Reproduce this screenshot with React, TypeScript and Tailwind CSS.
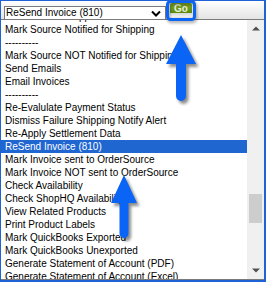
import React from "react";

const items: { t: string; sel?: boolean }[] = [
  { t: "Mark Source Notified for Shipping" },
  { t: "----------" },
  { t: "Mark Source NOT Notified for Shipping" },
  { t: "Send Emails" },
  { t: "Email Invoices" },
  { t: "----------" },
  { t: "Re-Evalulate Payment Status" },
  { t: "Dismiss Failure Shipping Notify Alert" },
  { t: "Re-Apply Settlement Data" },
  { t: "ReSend Invoice (810)", sel: true },
  { t: "Mark Invoice sent to OrderSource" },
  { t: "Mark Invoice NOT sent to OrderSource" },
  { t: "Check Availability" },
  { t: "Check ShopHQ Availability" },
  { t: "View Related Products" },
  { t: "Print Product Labels" },
  { t: "Mark QuickBooks Exported" },
  { t: "Mark QuickBooks Unexported" },
  { t: "Generate Statement of Account (PDF)" },
  { t: "Generate Statement of Account (Excel)" },
];

function Arrow({ tipX, tipY, headW, baseY, shaftW, bottomY }: { tipX: number; tipY: number; headW: number; baseY: number; shaftW: number; bottomY: number }) {
  const hw = headW / 2;
  const sw = shaftW / 2;
  const d = `M ${tipX} ${tipY} L ${tipX + hw} ${baseY} L ${tipX + sw} ${baseY} L ${tipX + sw} ${bottomY - sw} A ${sw} ${sw} 0 0 1 ${tipX - sw} ${bottomY - sw} L ${tipX - sw} ${baseY} L ${tipX - hw} ${baseY} Z`;
  return (
    <g>
      <path d={d} fill="#000" opacity="0.45" transform="translate(2.5,3)" filter="url(#blur)" />
      <path d={d} fill="#0a64f5" />
    </g>
  );
}

export default function App() {
  return (
    <div
      className="relative w-[266px] h-[282px] border-t border-l border-r-2 border-b-2 border-[#1f62d6] flex flex-col overflow-hidden bg-white"
      style={{ fontFamily: '"Liberation Sans", Arial, sans-serif' }}
    >
      {/* header */}
      <div className="h-[18px] shrink-0 flex items-start bg-gradient-to-b from-white to-[#e4e4e4]">
        <div className="ml-[3px] mt-[5px] w-[162px] h-[13px] border-t border-l border-r border-[#7a7a7a] bg-white flex items-center justify-between pl-[1px] pr-[4px]">
          <span className="text-[10px] leading-[12px] text-black">ReSend Invoice (810)</span>
          <svg width="10" height="7" viewBox="0 0 10 7" className="mt-[1px]">
            <path d="M1 1.5 L5 5.5 L9 1.5" stroke="#000" strokeWidth="2" fill="none" />
          </svg>
        </div>
        <div className="ml-[4px] mt-[2px] w-[22px] h-[14px] rounded-[2px] flex flex-col overflow-hidden">
          <div className="h-[10px] bg-gradient-to-b from-[#7fa82a] to-[#5a8a08] flex items-center justify-center">
            <span className="text-[10px] font-bold leading-[10px] text-[#e9eedd] mt-[1px]">Go</span>
          </div>
          <div className="flex-1 bg-gradient-to-b from-[#d8d8d8] to-[#f0f0f0]" />
        </div>
      </div>

      {/* list */}
      <div className="flex-1 border-t border-b border-[#7a7a7a] flex min-h-0">
        <div className="flex-1 overflow-hidden flex flex-col">
          <div className="h-[13px] shrink-0 -mt-[10px] pl-[4px] text-[10px] leading-[13px] text-black whitespace-nowrap">
            Mark Source Shipped
          </div>
          {items.map((it, i) => (
            <div
              key={i}
              className={
                "h-[13px] shrink-0 pl-[4px] text-[10px] leading-[13px] whitespace-nowrap " +
                (it.sel ? "bg-[#1f66d1] text-white" : "text-black")
              }
            >
              {it.t}
            </div>
          ))}
        </div>
        {/* scrollbar */}
        <div className="w-[17px] shrink-0 bg-[#f0f0f0] flex flex-col items-center">
          <div className="h-[17px] w-full flex items-center justify-center">
            <svg width="8" height="5" viewBox="0 0 8 5"><path d="M0 4.5 L4 0.5 L8 4.5 Z" fill="#505050" /></svg>
          </div>
          <div className="h-[157px]" />
          <div className="w-[13px] h-[29px] bg-[#cdcdcd]" />
          <div className="flex-1" />
          <div className="h-[17px] w-full flex items-center justify-center">
            <svg width="8" height="5" viewBox="0 0 8 5"><path d="M0 0.5 L8 0.5 L4 4.5 Z" fill="#505050" /></svg>
          </div>
        </div>
      </div>

      {/* annotations */}
      <svg className="absolute left-[-1px] top-[-1px] pointer-events-none" width="266" height="282" viewBox="0 0 266 282">
        <defs>
          <filter id="blur" x="-50%" y="-50%" width="200%" height="200%">
            <feGaussianBlur stdDeviation="1.5" />
          </filter>
        </defs>
        <rect x="167.5" y="2" width="27" height="18" rx="3" fill="none" stroke="#000" strokeOpacity="0.35" strokeWidth="3" filter="url(#blur)" transform="translate(1,1.5)" />
        <rect x="167.5" y="1.5" width="27" height="18" rx="3" fill="none" stroke="#0a64f5" strokeWidth="3" />
        <Arrow tipX={181} tipY={35} headW={30} baseY={64} shaftW={10} bottomY={101} />
        <Arrow tipX={124} tipY={175} headW={26} baseY={203} shaftW={9} bottomY={238} />
      </svg>
    </div>
  );
}
